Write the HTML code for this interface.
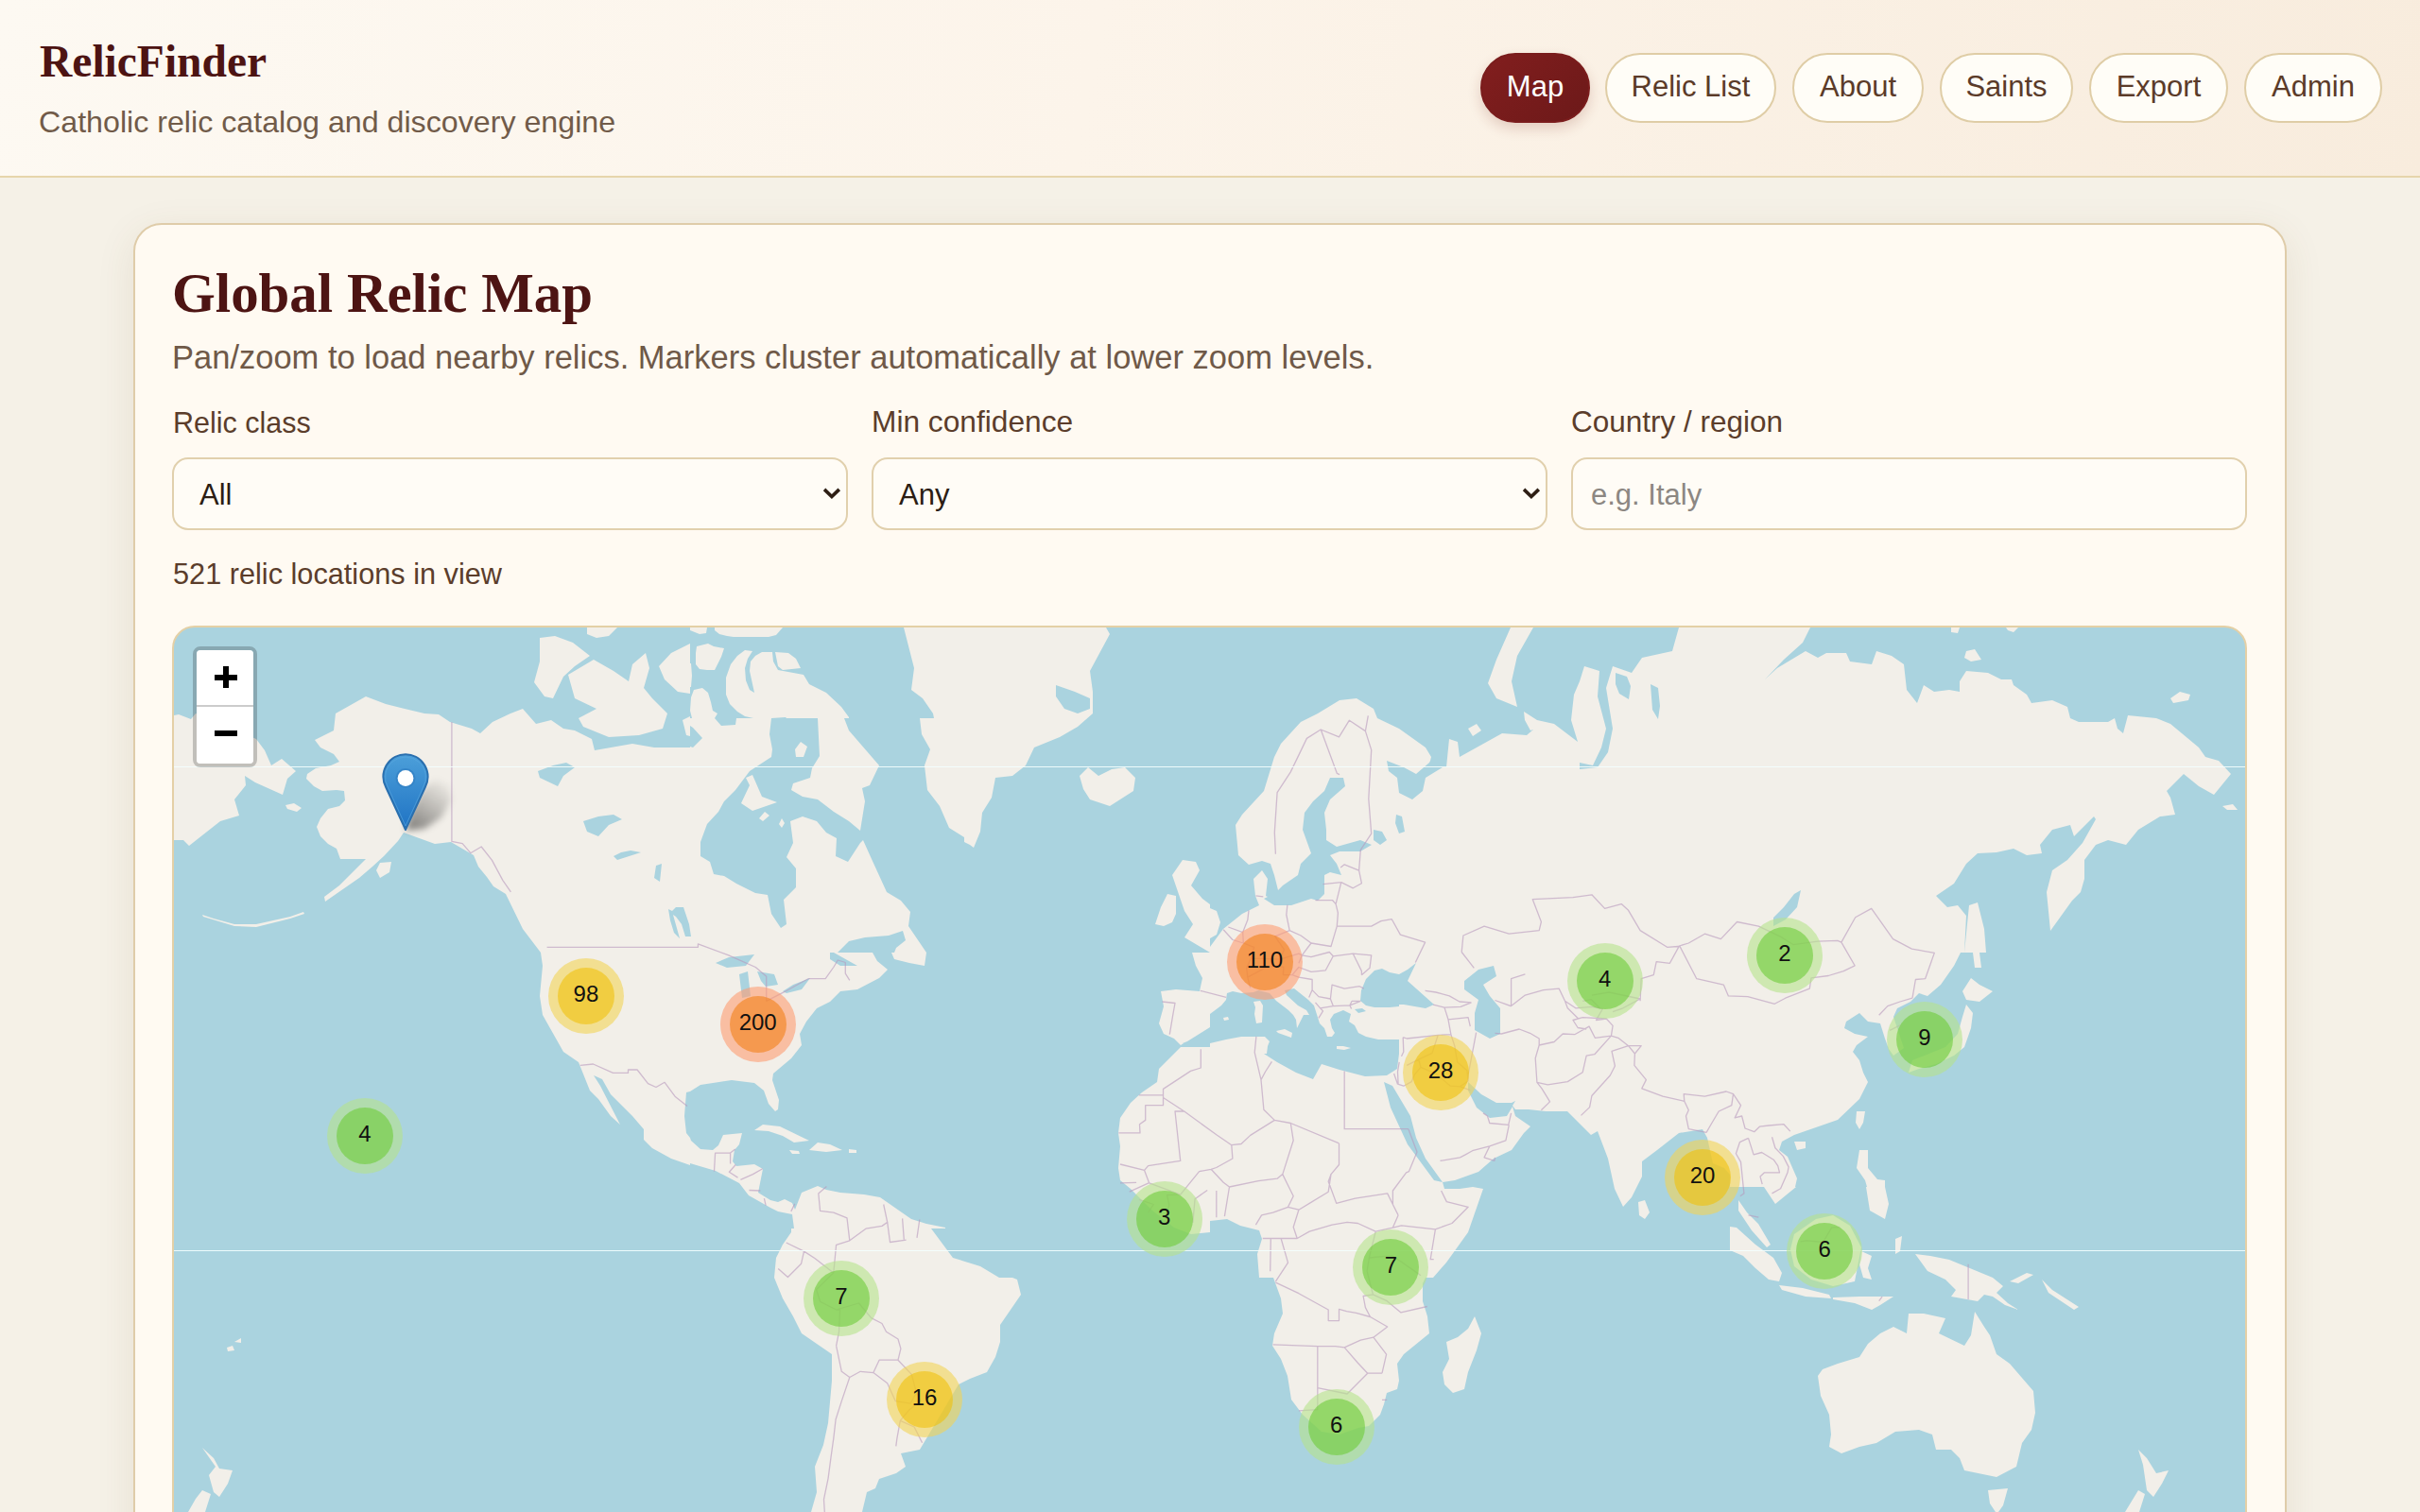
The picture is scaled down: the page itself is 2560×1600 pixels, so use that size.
<!DOCTYPE html>
<html><head><meta charset="utf-8">
<style>
html,body{margin:0;padding:0;}
body{width:2560px;height:1600px;overflow:hidden;position:relative;background:#f5f1e7;font-family:"Liberation Sans",sans-serif;}
.abs{position:absolute;}
#hdr{left:0;top:0;width:2560px;height:186px;background:linear-gradient(100deg,#fdf9f2 0%,#fcf4ea 45%,#f8ecdd 100%);border-bottom:2px solid #e6d5ab;}
#title{left:42px;top:42px;font-family:"Liberation Serif",serif;font-weight:bold;font-size:47.5px;color:#4d1413;white-space:nowrap;line-height:1;}
#sub{left:41px;top:113px;font-size:32.2px;color:#715b49;white-space:nowrap;line-height:1;}
.pill{position:absolute;top:56px;height:74px;box-sizing:border-box;border:2px solid #dfcda6;border-radius:37px;background:#fffdf7;color:#5b3b29;font-size:31px;line-height:67px;text-align:center;white-space:nowrap;}
.pill.act{background:linear-gradient(135deg,#821e1e,#6c1919);border-color:#7a1c1c;color:#fff;box-shadow:0 6px 14px rgba(120,40,20,0.18);}
#card{left:141px;top:236px;width:2278px;height:1500px;box-sizing:border-box;border:2px solid #dfcca9;border-radius:30px;background:#fffaf2;box-shadow:0 10px 40px rgba(110,80,40,0.10);}
#h1{left:182px;top:281.5px;font-family:"Liberation Serif",serif;font-weight:bold;font-size:58.9px;color:#4d1413;white-space:nowrap;line-height:1;}
#lead{left:182px;top:361px;font-size:34.5px;color:#6f5948;white-space:nowrap;line-height:1;}
.lbl{position:absolute;font-size:30.5px;color:#5b3d2b;white-space:nowrap;line-height:1;}
.inp{position:absolute;top:484px;height:77px;width:715px;box-sizing:border-box;border:2px solid #e1d0ad;border-radius:17px;background:#fffcf6;}
.inp span{position:absolute;left:27px;top:22px;font-size:31px;color:#2b1d14;line-height:1;white-space:nowrap;}
#count{left:183px;top:593px;font-size:30.7px;color:#5b3d2b;white-space:nowrap;line-height:1;}
#map{left:182px;top:662px;width:2195px;height:1000px;box-sizing:border-box;border:2px solid #e4d0a6;border-radius:24px;overflow:hidden;background:#aad3df;}

.cl{position:absolute;width:80px;height:80px;border-radius:40px;}
.cl div{position:absolute;left:10px;top:10px;width:60px;height:60px;border-radius:30px;text-align:center;line-height:56px;font-size:24px;color:#111;font-family:"Liberation Sans",sans-serif;}
.zc{position:absolute;left:20px;top:20px;width:68px;height:128px;box-sizing:border-box;border:4px solid rgba(0,0,0,0.2);border-radius:8px;background-clip:padding-box;}
.zc>div{position:absolute;background:#000;}
.zc:before{content:"";position:absolute;left:0;top:0;right:0;bottom:0;background:#fff;border-radius:4px;}
.zp{left:19.3px;top:26.1px;width:23.6px;height:5.5px;}
.zph{left:28.1px;top:16.8px;width:6px;height:23.3px;}
.zsep{left:0;top:58px;width:60px;height:2px;background:#ccc !important;}
.zm{left:19.3px;top:85.1px;width:23.6px;height:5.8px;}
</style></head>
<body>
<div id="hdr" class="abs"></div>
<div id="title" class="abs">RelicFinder</div>
<div id="sub" class="abs">Catholic relic catalog and discovery engine</div>
<div class="pill act" style="left:1566px;width:116px;">Map</div>
<div class="pill" style="left:1698px;width:181px;">Relic List</div>
<div class="pill" style="left:1896px;width:139px;">About</div>
<div class="pill" style="left:2052px;width:141px;">Saints</div>
<div class="pill" style="left:2210px;width:147px;">Export</div>
<div class="pill" style="left:2374px;width:146px;">Admin</div>

<div id="card" class="abs"></div>
<div id="h1" class="abs">Global Relic Map</div>
<div id="lead" class="abs">Pan/zoom to load nearby relics. Markers cluster automatically at lower zoom levels.</div>
<div class="lbl" style="left:183px;top:432px;">Relic class</div>
<div class="lbl" style="left:922px;top:431px;font-size:31.7px;">Min confidence</div>
<div class="lbl" style="left:1662px;top:431px;font-size:31.5px;">Country / region</div>
<div class="inp" style="left:182px;"><span>All</span></div>
<div class="inp" style="left:922px;"><span>Any</span></div>
<div class="inp" style="left:1662px;"><span style="color:#8c8782;left:19px;">e.g. Italy</span></div>
<svg class="abs" style="left:860px;top:505px" width="40" height="35" viewBox="860 505 40 35"><polygon points="873.3,516.6 879.9,523.1 886.5,516.6 889.05,519.2 879.9,528.1 870.8,519.2" fill="#2e1e14"/></svg><svg class="abs" style="left:1600px;top:505px" width="40" height="35" viewBox="1600 505 40 35"><polygon points="1613.3,516.6 1619.9,523.1 1626.5,516.6 1629.05,519.2 1619.9,528.1 1610.8,519.2" fill="#2e1e14"/></svg>
<div id="count" class="abs">521 relic locations in view</div>
<div id="map" class="abs"><svg class="abs" style="left:0;top:0" width="2191" height="940" viewBox="0 0 2191 940"><path fill="#f2efe9" d="M2183,193 2178,187 2167,189 2172,193ZM1342,587 1355,585 1380,576 1396,562 1415,553 1428,535 1435,528 1419,517 1416,507 1410,517 1392,519 1378,508 1369,490 1369,481 1383,494 1399,503 1415,503 1419,501 1416,506 1419,510 1433,510 1451,512 1474,512 1499,537 1506,533 1517,562 1524,594 1533,613 1542,603 1553,581 1553,565 1569,553 1592,535 1617,531 1622,540 1628,567 1640,572 1646,579 1646,592 1682,592 1694,610 1716,592 1715,592 1717,583 1707,560 1698,553 1701,544 1714,537 1737,529 1760,521 1783,499 1792,481 1787,471 1783,458 1776,449 1780,442 1792,433 1778,430 1767,424 1769,417 1783,408 1792,417 1805,419 1810,435 1814,446 1819,453 1830,445 1819,412 1823,403 1837,396 1846,387 1855,390 1869,378 1883,358 1890,344 1894,344 1896,305 1887,294 1876,296 1864,284 1883,271 1896,250 1908,239 1928,238 1946,234 1960,241 1976,239 1974,230 1987,214 2006,209 2010,221 2031,200 2033,203 2019,228 2003,246 1987,257 1981,280 1985,321 2008,289 2017,280 2021,266 2021,246 2033,230 2046,225 2065,230 2078,214 2101,200 2117,198 2112,180 2108,173 2126,155 2142,168 2158,177 2176,155 2163,141 2149,137 2142,127 2112,102 2097,96 2067,93 2062,112 2056,107 2053,96 2046,100 2015,100 2006,96 2003,84 1987,77 1965,80 1960,71 1946,61 1944,55 1933,55 1919,48 1896,46 1889,57 1889,68 1878,66 1862,68 1851,61 1844,80 1833,66 1830,39 1817,30 1801,25 1796,39 1773,36 1769,27 1748,27 1739,32 1726,25 1696,43 1683,55 1703,34 1723,16 1731,0 1592,0 1585,25 1553,32 1542,48 1522,41 1515,64 1522,107 1517,132 1506,148 1487,150 1487,143 1501,146 1510,127 1515,107 1506,73 1508,46 1492,41 1487,57 1481,71 1478,98 1485,121 1460,102 1442,98 1428,89 1429,98 1435,109 1438,108 1431,114 1405,112 1360,137 1358,121 1349,118 1346,148 1342,148 1324,159 1321,173 1310,182 1296,175 1294,159 1285,152 1283,141 1301,148 1314,155 1328,143 1329,141 1330,137 1324,127 1296,107 1273,96 1269,86 1251,75 1233,77 1210,91 1192,100 1171,123 1164,137 1153,173 1130,198 1123,209 1126,241 1137,251 1151,247 1160,250 1164,262 1168,278 1173,273 1189,262 1192,250 1203,239 1194,214 1196,196 1205,184 1217,173 1223,159 1237,159 1239,168 1223,182 1217,196 1219,214 1219,225 1230,232 1255,225 1267,230 1255,237 1233,237 1223,241 1230,250 1235,262 1223,259 1217,262 1217,282 1210,289 1203,287 1182,294 1164,294 1153,287 1157,285 1155,284 1157,266 1151,257 1142,266 1144,284 1148,294 1130,303 1110,319 1096,338 1096,329 1103,325 1107,312 1103,300 1096,297 1096,293 1088,287 1076,273 1085,257 1081,248 1067,246 1056,262 1069,300 1078,314 1069,328 1096,344 1077,344 1081,358 1088,371 1085,385 1060,383 1044,385 1047,401 1042,419 1047,430 1058,435 1065,442 1068,440 1067,440 1072,438 1096,423 1096,409 1108,400 1113,394 1114,387 1120,385 1129,387 1142,386 1147,384 1159,387 1166,395 1179,405 1184,410 1187,415 1188,424 1195,410 1201,410 1198,405 1189,400 1177,389 1175,384 1185,382 1200,394 1206,400 1212,419 1217,424 1220,433 1225,433 1228,429 1225,424 1223,415 1227,409 1237,405 1245,409 1243,417 1249,421 1253,429 1261,433 1274,436 1296,436 1296,451 1294,467 1283,474 1260,475 1233,468 1214,462 1205,478 1187,471 1167,460 1153,451 1156,451 1157,443 1159,438 1154,433 1142,433 1129,433 1113,436 1096,440 1096,444 1065,444 1042,467 1040,481 1024,492 1012,503 1001,519 999,535 1001,549 999,572 1001,585 1012,594 1035,617 1058,635 1076,642 1096,640 1096,628 1114,626 1128,633 1148,638 1151,647 1146,663 1148,688 1163,688 1171,710 1173,726 1164,747 1162,760 1171,774 1178,792 1182,817 1194,833 1214,851 1233,854 1253,847 1264,845 1276,833 1280,822 1283,810 1294,806 1296,797 1294,779 1301,769 1328,747 1326,729 1321,713 1321,694 1324,688 1332,688 1346,672 1369,640 1385,594 1374,592 1360,594 1344,594ZM1333,585 1305,547 1287,508 1280,481 1289,485 1308,517 1314,540 1324,562 1342,587ZM1703,296 1714,282 1721,278 1717,296 1705,309 1692,316 1692,307ZM1572,83 1570,97 1564,87 1562,60 1570,64ZM1525,60 1525,48 1537,52 1541,62 1539,76 1529,70ZM1392,390 1403,403 1403,430 1392,435 1376,426 1376,408 1380,394 1365,383 1365,374 1380,362 1396,358 1399,369 1385,378ZM1270,402 1261,400 1255,395 1256,384 1261,372 1270,363 1278,361 1286,365 1296,367 1305,362 1314,355 1305,374 1333,399 1324,403 1301,399 1296,399 1296,401 1286,402ZM1296,218 1292,207 1293,198 1299,200 1302,216ZM1269,225 1269,214 1278,216 1283,225 1276,230ZM1261,406 1253,408 1249,404 1257,403ZM2122,68 2112,75 2115,80 2131,77 2133,71ZM2094,920 2103,906 2110,892 2097,895 2087,879 2078,870 2083,886 2087,913ZM2078,913 2064,936 2079,936 2085,917ZM1976,690 1983,704 2010,722 2015,719 1987,701ZM1928,899 1949,888 1955,863 1965,849 1969,831 1967,808 1942,779 1928,769 1921,749 1915,740 1905,724 1901,749 1894,760 1867,747 1874,731 1851,726 1835,726 1833,747 1819,740 1805,747 1792,758 1783,772 1760,779 1744,785 1739,792 1742,813 1751,833 1753,854 1751,867 1764,874 1783,867 1801,863 1821,851 1846,849 1860,854 1864,870 1880,870 1889,879 1894,892ZM1951,694 1967,685 1960,683 1942,692ZM1908,713 1915,706 1924,708 1937,717 1951,722 1940,715 1928,704 1935,697 1924,688 1878,669 1858,665 1842,663 1855,681 1874,690 1885,701 1880,708ZM1940,3 1946,5 1951,0 1938,0ZM1921,927 1927,936 1930,936 1935,929 1940,911 1919,913ZM1892,385 1896,394 1910,396 1924,385 1910,378 1901,371ZM1908,291 1899,294 1894,344 1903,344 1905,360 1912,360 1910,344 1917,344 1915,319ZM1894,32 1901,36 1912,34 1905,23 1896,25ZM1864,462 1883,453 1894,444 1901,424 1903,408 1896,399 1892,412 1887,430 1874,444 1839,458 1835,471 1846,467ZM1889,0 1880,0 1880,5 1887,6ZM1828,644 1821,647 1821,663 1826,660ZM1819,708 1783,708 1755,709 1755,711 1778,715 1796,722 1805,717ZM1790,592 1794,617 1810,626 1814,610 1810,592 1810,585 1802,584 1792,572 1792,553 1783,553 1780,572 1789,585 1791,592ZM1792,678 1796,665 1785,660 1783,674 1787,688 1796,690ZM1779,524 1783,531 1787,524 1789,512 1780,512ZM1785,656 1773,633 1755,622 1737,626 1714,642 1710,658 1714,676 1732,690 1755,697 1778,692ZM1726,708 1753,710 1751,706 1723,699 1698,696 1701,701ZM1726,544 1714,544 1717,553 1726,551ZM1646,634 1646,659 1660,665 1673,678 1687,690 1698,692 1701,683 1692,667 1673,653 1653,635ZM1685,656 1689,653 1676,631 1664,619 1655,606 1655,617 1669,638ZM1549,608 1550,622 1556,626 1561,619 1556,606ZM1421,30 1438,0 1414,0 1399,34 1390,59 1399,75 1421,84 1415,57ZM1378,102 1369,107 1374,115 1383,109ZM1358,751 1346,756 1349,774 1342,788 1344,801 1353,810 1365,806 1369,788 1378,765 1383,747 1376,729 1369,742ZM1230,446 1238,447 1245,445 1237,443 1230,443ZM1166,427 1168,429 1182,434 1183,429 1175,425ZM1145,419 1151,418 1152,400 1149,395 1142,396 1144,402 1143,409ZM1111,416 1116,415 1115,412 1110,413ZM1038,314 1047,316 1056,312 1060,303 1060,284 1051,282 1044,296ZM990,189 1015,173 1017,159 1006,148 992,150 978,157 967,148 958,157 962,171 969,182ZM901,146 910,127 937,116 956,105 972,91 972,68 969,46 990,7 986,0 772,0 783,43 780,66 792,75 803,91 804,96 789,96 791,113 800,129 794,146 797,172 810,189 820,212 836,222 836,227 842,230 846,233 853,216 855,196 865,180 869,159 887,157ZM969,75 969,86 956,91 942,86 933,73 933,61 953,68ZM472,526 451,485 444,474 453,478 462,494 485,517 497,531 497,542 506,551 526,562 546,569 546,567 573,575 598,588 608,601 631,614 639,618 654,621 656,636 653,636 653,640 644,653 637,667 635,688 644,710 655,729 664,747 696,769 696,797 692,842 687,865 678,888 680,915 674,936 728,936 733,915 742,911 746,901 764,895 774,888 769,874 789,870 830,801 842,795 860,788 869,772 874,756 874,738 896,706 892,690 887,688 873,688 853,676 824,667 801,636 816,636 816,635 796,631 780,626 747,603 730,600 705,598 690,595 681,591 664,598 657,616 654,609 646,605 639,608 631,606 618,598 623,573 614,568 595,570 591,565 593,553 598,547 601,535 581,537 576,548 570,553 557,552 547,543 546,540 542,535 540,517 542,492 546,491 557,484 590,479 614,482 624,490 629,504 636,512 639,510 640,500 633,479 634,472 653,456 664,442 662,430 669,417 680,403 694,396 705,385 723,383 746,371 755,362 744,353 739,344 702,344 714,332 731,328 756,326 771,321 774,331 764,339 762,344 759,344 762,351 778,355 794,358 796,344 777,316 779,301 769,289 754,280 738,245 729,225 726,228 713,248 700,242 701,223 690,217 680,205 665,200 652,205 655,228 648,243 658,255 658,275 645,288 648,314 642,318 632,303 628,283 615,281 595,271 582,263 571,261 567,248 557,242 557,227 564,208 576,195 582,184 594,172 609,152 632,137 633,129 630,113 632,96 647,95 648,96 681,96 683,136 675,149 673,159 655,165 653,172 665,179 681,182 698,195 714,205 726,215 731,184 728,170 736,167 746,146 714,109 709,96 714,96 714,95 706,84 690,69 672,60 666,50 639,45 634,36 633,26 622,26 615,30 610,36 609,46 614,69 609,66 605,56 604,43 607,33 612,25 604,24 596,30 589,39 584,53 584,71 588,81 596,89 604,94 613,96 595,96 594,103 579,104 572,96 575,91 570,88 568,79 565,69 559,64 550,66 547,74 546,88 548,96 546,96 546,94 538,98 542,114 546,115 546,104 549,106 559,117 549,127 546,126 546,127 508,127 485,123 445,130 442,118 424,109 412,107 399,98 383,102 369,86 356,91 337,100 324,112 315,107 292,100 280,92 265,91 244,86 224,81 203,73 171,91 169,109 149,119 155,127 169,134 175,142 166,146 150,149 141,155 140,160 148,168 157,173 172,172 180,173 181,183 175,189 163,192 155,202 151,211 155,221 163,229 172,234 176,245 203,245 175,273 159,285 160,290 196,265 210,253 222,242 237,226 243,217 276,229 293,227 317,241 322,253 331,264 338,274 351,282 369,319 388,344 390,358 387,390 390,410 412,449 428,460 440,490 449,499 462,517ZM705,358 694,351 694,344 698,344 723,358ZM673,371 664,383 648,387 644,385 655,378ZM626,380 621,374 617,364 635,367 639,378ZM573,355 587,349 614,346 605,358 585,360ZM601,392 598,367 607,364 610,390ZM531,306 528,304 535,329 529,323 525,310 523,298 527,300 531,296 539,296 545,314 547,327 541,327 537,314ZM516,250 514,269 508,265 510,252ZM494,238 469,246 465,242 473,238 483,236ZM433,205 449,200 465,198 474,203 460,209 449,221 437,216ZM387,159 385,152 401,146 415,143 424,148 412,157 406,168ZM714,556 722,556 722,553 714,552ZM690,555 707,553 694,547 681,545 672,553ZM614,532 629,533 644,538 656,545 672,543 641,528 623,526ZM658,137 666,137 670,126 663,121 657,129ZM636,26 639,41 644,45 663,43 658,33 650,27ZM661,554 651,553 654,557 662,557ZM646,207 643,202 640,208 643,212ZM644,0 572,0 572,3 577,7 585,9 592,10 629,10 637,8ZM622,179 612,156 605,159 609,167 600,186 612,194 638,185ZM630,199 625,195 619,202 623,205ZM571,20 565,17 553,20 552,27 552,39 556,44 564,45 572,45 579,31 582,22ZM546,0 546,3 556,7 563,6 564,0ZM546,17 526,27 513,41 519,55 533,68 546,70 546,63 547,63 548,51 547,38 546,38ZM447,86 428,96 433,105 460,116 492,114 517,107 522,91 506,75 497,64 503,43 499,27 485,39 481,57 465,46 444,34 417,50 424,75ZM447,11 460,9 469,0 437,0 437,7ZM403,9 387,11 387,36 381,58 392,73 401,75 412,52 424,41 440,30 422,16ZM214,257 218,265 228,259 230,248 218,249ZM64,316 87,317 123,308 138,303 137,301 123,306 87,314 64,314 42,308 30,304 31,306ZM135,191 127,186 118,188 120,192 130,195ZM-4,225 10,225 16,231 49,205 69,199 64,182 76,167 75,157 86,164 115,177 120,160 129,152 114,139 103,146 96,130 87,118 23,91 18,97 5,92 -4,94ZM71,757 71,752 64,756ZM56,762 57,766 64,765 62,760ZM30,868 44,888 37,897 42,915 48,920 57,906 62,892 48,890 42,879ZM23,922 15,936 33,936 39,917 30,913Z"/><path fill="none" stroke="#b898bc" stroke-opacity="0.6" stroke-width="1.3" stroke-linejoin="round" d="M293.9,99.9 293.9,226.3 305.2,228.6 313.8,238.7 325.2,232.0 336.5,246.4 347.9,267.6 356.4,279.8M394.6,338.3 554.4,338.3 554.4,334.8 586.8,346.9 615.3,359.5 626.7,369.3 626.7,395.3 646.6,385.2 660.8,377.3 671.0,371.7 689.2,371.7 697.8,359.5 702.3,352.0 710.3,354.5 710.3,366.1 714.8,373.3M429.8,463.3 443.5,462.0 464.5,471.4 480.5,471.4 480.5,468.0 490.1,468.0 501.5,482.6 510.0,486.5 519.1,481.3 530.0,496.2 543.0,506.4M571.5,575.6 572.6,556.1 588.6,556.1 593.7,551.9M588.6,556.1 588.6,567.4M594.2,568.5 587.4,576.2 596.5,582.1M599.4,584.4 612.4,578.6 622.7,572.7M608.5,595.5 620.4,596.0M624.4,604.1 626.1,611.6M652.8,617.9 656.8,609.9M700.6,760.1 706.3,787.3 714.8,793.5 706.3,818.6 700.1,838.0 697.8,858.1 694.9,878.8 692.1,900.3 687.5,922.7 688.7,942.3M700.6,760.1 703.5,745.3 704.6,722.0 700.6,722.0M700.6,722.0 724.5,715.0 737.6,730.7 749.0,736.5 753.5,745.3 766.0,753.0 768.9,763.1 766.0,775.2M714.8,793.5 726.2,787.3 739.9,788.6 746.1,775.2 766.0,775.2M739.9,788.6 754.7,799.7 763.2,818.6 779.1,821.2 785.4,809.7M766.0,775.2 780.3,790.4 785.4,809.7M785.4,809.7 789.9,818.6 777.4,828.3 768.3,839.4 783.1,846.0 791.6,862.8M768.3,839.4 764.9,858.1 763.8,866.3M700.6,722.0 683.6,713.3 679.6,700.6 697.8,682.9M697.8,682.9 677.9,667.5 666.5,660.1 647.7,651.0M666.5,660.1 663.6,673.2 649.4,687.5 639.2,678.4M697.8,682.9 700.6,653.3 714.8,648.8 712.0,624.8 697.8,619.1 683.6,617.4 681.8,598.9 690.4,591.4M714.8,648.8 731.9,636.2 749.0,633.4 754.7,629.4 750.7,610.5M754.7,629.4 757.5,650.5 774.6,648.2M770.6,625.4 772.3,647.6M788.8,626.5 786.0,645.9M1086.3,446.2 1086.3,466.0 1075.5,469.4 1046.5,488.4 1046.5,494.9 1020.9,494.9M1046.5,494.9 1046.5,505.7 1027.7,505.7 1027.7,521.4 1021.5,525.7 1022.0,534.9 999.3,534.9M1046.5,497.5 1068.7,512.0 1059.0,512.0 1064.7,564.4 1030.6,569.7 1026.6,574.4 1001.0,568.0M1068.7,512.0 1102.8,536.8 1118.8,547.7 1129.0,546.5 1138.7,537.4 1164.3,521.4M1144.9,432.9 1143.2,449.7 1150.0,478.6 1152.9,510.2 1164.3,521.4M1161.4,459.3 1154.6,470.0 1150.0,478.6M1164.3,521.4 1181.3,524.5 1232.5,545.9M1238.2,469.4 1238.2,530.7 1305.9,530.7M1232.5,545.9 1232.5,568.5 1224.0,578.6 1221.2,586.2 1229.7,609.3 1249.6,604.1 1283.7,598.9 1289.4,610.5 1295.1,621.9M1305.9,530.7 1315.0,554.9 1306.5,575.6 1303.6,576.8 1289.4,596.0 1289.4,610.5M1181.3,524.5 1184.2,542.8 1172.8,578.6 1178.5,590.2 1184.2,601.8 1178.5,613.3 1189.9,616.2 1204.1,607.6 1221.2,597.2 1224.0,578.6M1118.8,547.7 1119.9,562.0 1102.8,571.5 1097.1,573.3 1084.6,575.6 1064.7,600.1 1031.7,587.9 1026.6,574.4M1097.1,573.3 1110.2,587.3 1116.5,592.0 1147.2,585.6 1167.1,583.2 1172.8,578.6M1116.5,592.0 1111.4,623.1M1102.8,596.0 1102.8,624.2M1077.8,629.9 1080.1,604.7 1093.2,595.5M1047.1,633.9 1052.8,611.0 1050.5,600.7 1064.7,600.1M1030.6,619.1 1036.3,610.5 1020.9,605.3M1018.1,587.3 1001.0,587.9M1031.1,587.9 1010.7,597.2M1144.4,632.2 1150.6,621.9 1162.6,619.1 1178.5,613.3M1189.9,616.2 1184.2,634.5 1188.2,646.5 1201.2,639.1 1225.1,632.2 1241.1,629.4 1252.4,630.5 1271.2,639.1 1289.4,635.1 1295.1,621.9M1151.8,646.5 1160.3,646.5 1188.2,646.5M1160.3,646.5 1159.7,681.2M1171.1,646.5 1178.5,672.1 1165.4,692.1M1271.2,639.1 1264.4,667.0 1262.1,681.2 1268.4,705.8 1258.1,707.5 1260.4,719.6 1265.5,729.5 1250.7,725.4 1240.5,723.7 1232.5,721.4 1232.5,733.6 1221.2,733.6 1221.2,722.0 1189.9,704.7 1165.4,693.2M1289.4,635.1 1298.5,632.8 1334.4,636.8 1329.2,668.7 1332.7,668.7M1334.4,636.8 1352.0,630.5 1369.1,613.3 1346.3,607.6 1340.6,596.0M1288.9,664.7 1309.3,678.9 1319.0,685.8M1264.4,667.0 1288.9,664.7M1268.4,705.8 1283.2,712.7 1298.0,724.9 1325.8,718.5M1162.6,758.9 1209.8,760.7 1228.6,760.7 1238.2,761.9M1209.8,760.7 1209.8,787.3 1209.8,804.7 1209.8,827.6 1189.9,828.9M1209.8,804.7 1241.1,811.0 1262.7,789.2 1278.0,789.2M1238.2,761.9 1252.4,778.2 1262.7,789.2M1265.5,729.5 1283.7,740.0 1268.9,751.2 1255.3,754.2 1238.2,761.9M1278.0,789.2 1282.6,769.1 1268.9,751.2M1278.0,817.3 1283.2,817.3M1085.8,384.4 1113.1,391.4M1045.4,396.0 1059.0,397.5 1056.7,410.3 1053.3,430.7M1110.2,319.7 1119.9,330.5 1131.3,334.0 1142.6,338.3 1139.2,350.3 1134.7,360.3 1135.8,370.1 1138.7,381.3M1131.3,334.0 1130.7,322.4 1135.8,309.6 1137.0,299.3M1115.3,317.0 1130.1,322.4M1144.4,283.8 1152.3,284.8M1139.2,350.3 1150.0,350.3 1170.0,351.1 1174.5,340.9 1164.8,326.9 1180.2,320.6 1176.8,304.0 1177.9,293.5M1135.8,370.1 1155.7,359.5 1167.1,357.8 1173.9,359.5 1173.4,367.7M1180.2,320.6 1192.1,326.0 1203.0,334.0 1224.0,337.5 1230.3,316.1 1231.4,302.1 1229.1,292.6 1225.7,288.7 1207.5,288.7M1170.0,351.1 1189.9,345.2 1193.3,346.9 1203.0,334.0M1193.3,346.9 1203.0,348.6 1222.3,343.5 1226.3,347.8M1189.9,355.3 1193.3,346.9M1173.4,367.7 1183.0,367.7 1189.9,359.5 1203.0,364.4 1218.3,362.8 1226.3,347.8 1247.3,345.2 1256.4,363.6 1256.4,367.7M1183.0,367.7 1189.9,370.1 1204.1,372.5 1204.1,383.6 1210.9,390.6 1223.4,393.0 1226.3,400.6 1243.9,399.8 1255.3,395.3M1223.4,393.0 1225.1,378.1 1238.2,382.1 1254.2,379.7 1258.7,382.1M1200.7,391.4 1204.1,383.6M1207.5,396.8 1212.6,402.8 1215.5,405.9 1210.9,413.3M1212.6,402.8 1226.3,400.6M1229.1,292.6 1234.8,269.7 1247.3,275.8 1256.4,270.7 1253.6,257.2 1238.2,250.8 1234.2,254.0M1215.5,271.7 1234.8,269.7M1253.6,257.2 1255.3,235.4M1231.4,302.1 1230.3,316.1 1266.7,316.1 1276.9,310.6 1288.3,308.7 1297.4,325.1 1323.6,333.1 1313.3,354.5M1247.3,345.2 1266.7,346.9 1265.0,360.3 1256.4,367.7M1255.3,235.4 1266.7,218.2 1263.8,181.2 1266.7,129.6 1260.4,109.6 1263.3,93.3M1213.2,108.0 1232.5,115.9 1243.3,98.3 1260.4,109.6 1263.3,93.3M1165.4,239.8 1164.3,217.0 1167.1,174.6 1181.3,152.9 1198.4,117.4 1213.2,108.0 1230.3,154.3 1233.1,155.6M1243.9,399.8 1246.2,395.3 1255.3,395.3M1245.6,403.6 1243.9,399.8M1300.2,433.6 1304.2,435.0 1337.2,431.4 1350.9,430.7 1348.0,414.8 1344.0,402.1 1332.1,399.1M1344.0,402.1 1361.1,401.3 1372.5,396.8M1323.6,384.4 1334.9,386.0 1349.2,389.9 1360.0,396.0 1372.5,396.8M1350.9,430.7 1354.8,442.7 1357.7,459.9 1367.9,468.7 1369.1,480.0M1337.2,431.4 1331.0,450.4 1316.7,457.2 1319.0,465.3 1335.5,472.7 1350.3,485.2 1360.5,485.8 1369.1,480.0M1300.2,433.6 1300.8,449.0 1298.5,453.8M1304.2,463.3 1316.7,457.2M1295.1,483.2 1294.5,470.0 1296.2,459.9M1294.5,483.2 1300.8,485.2 1309.3,480.6 1312.2,473.4 1319.0,465.3M1294.5,483.2 1290.6,472.0M1360.5,485.8 1371.3,489.7M1385.0,513.9 1389.5,517.0 1391.8,524.5 1411.7,526.3 1414.6,513.9M1391.8,548.9 1408.9,542.8 1412.3,526.3M1391.8,548.9 1386.1,560.8 1396.9,564.4 1397.5,560.8M1339.5,564.4 1360.5,560.8 1366.2,557.9 1373.6,553.7 1391.8,548.9M1369.1,480.0 1369.1,473.4 1377.6,428.6M1348.0,414.8 1369.1,412.6 1371.3,422.1M1444.2,442.0 1440.2,455.8 1441.9,481.3 1447.0,487.8 1453.3,498.1 1455.5,501.9 1446.4,510.8M1397.5,429.3 1404.3,430.0 1423.1,425.0 1434.5,429.3 1444.2,435.0 1444.2,442.0M1444.2,442.0 1460.1,438.5 1469.2,430.0 1481.7,430.7 1497.1,422.1 1503.3,434.3 1520.4,432.1 1502.8,451.7 1494.2,453.1 1490.2,470.7 1474.3,480.6 1453.3,483.9 1441.9,481.3M1520.4,432.1 1527.8,434.3 1538.6,442.7 1545.4,451.0 1544.9,463.3 1557.4,478.6 1552.8,487.8 1575.0,496.2 1597.8,501.3 1597.2,493.6 1619.4,496.2 1642.1,491.0 1649.5,493.6 1647.8,505.7 1634.2,512.0 1626.8,524.5 1621.1,534.3M1597.8,501.3 1602.3,510.8 1599.5,517.0 1602.3,530.7 1621.1,534.3M1488.5,516.4 1497.6,507.6 1499.9,495.5 1519.3,474.0 1524.4,464.0 1521.0,448.3 1538.6,442.7M1545.4,451.0 1552.2,442.7 1538.6,442.7M1397.5,394.5 1414.6,400.6 1429.4,389.1 1448.7,383.6 1465.2,382.1 1471.5,395.3 1482.8,402.8 1499.9,401.3 1511.3,403.6 1504.5,415.5 1515.3,414.0 1522.1,421.4 1520.4,432.1M1362.2,343.5 1375.3,360.3M1397.5,394.5 1414.0,400.6M1414.6,400.6 1414.6,371.7 1429.4,366.9M1362.2,343.5 1363.9,326.0 1386.1,316.1 1412.3,324.2 1444.2,320.6 1446.4,311.5 1437.3,287.7 1480.0,285.7 1499.9,282.8 1513.6,297.4 1531.2,292.6 1538.6,299.3 1551.1,320.6 1579.6,338.3 1590.9,337.5M1490.2,395.3 1499.3,393.7 1508.4,402.8 1499.9,401.3M1515.3,414.0 1490.2,412.6 1480.0,415.5 1485.1,423.5 1494.2,425.0M1471.5,395.3 1474.3,402.8 1485.7,414.0M1551.1,395.3 1552.2,371.7 1565.3,367.7 1568.2,353.7 1582.4,355.3 1592.6,336.6M1522.1,406.6 1532.9,402.8 1551.1,393.0M1499.9,389.1 1518.1,386.0 1551.1,393.0M1590.9,337.5 1602.3,334.0 1619.4,324.2 1636.4,329.6 1653.5,311.5 1676.3,316.1 1699.0,326.9 1713.2,335.7 1738.8,332.2 1759.9,331.3 1763.9,333.1M1592.6,336.6 1610.8,371.7 1639.3,378.1 1644.4,389.9 1664.9,390.6 1693.3,398.3 1704.7,392.2 1730.3,382.1 1732.0,370.9 1750.2,368.5 1766.2,363.6 1778.1,357.8 1763.9,333.1M1763.9,333.1 1778.7,306.8 1795.7,297.4 1818.5,329.6 1838.4,340.1 1862.3,344.4 1852.6,371.7 1842.4,372.5 1839.0,392.2M1803.7,410.3 1812.8,400.6 1825.9,396.0 1839.0,392.2M1815.1,426.4 1826.5,420.6M1649.5,493.6 1657.5,505.7 1651.2,518.9 1658.6,517.0 1662.0,530.0 1671.7,533.7 1677.4,528.2 1687.1,527.0 1703.0,525.7 1709.8,533.1M1665.5,540.4 1671.1,557.9 1679.7,555.5 1692.2,563.2 1696.7,569.7 1698.5,576.8 1682.5,576.8 1678.0,580.9 1680.2,589.1M1690.5,539.2 1693.9,550.7 1702.4,559.6 1708.1,570.9 1707.0,576.8 1699.6,593.7 1690.5,598.9M1665.5,540.4 1656.4,544.7 1652.4,556.7 1657.5,565.6 1660.9,598.9 1656.9,601.8M1665.5,621.9 1676.3,624.2M1720.6,649.9 1727.5,648.8 1744.5,650.5 1753.6,635.1 1762.2,634.5M1898.1,673.8 1898.1,711.0M1803.7,712.7 1807.1,708.1"/><rect x="0" y="147" width="2191" height="1" fill="#f4ffff" opacity="0.9"/><rect x="0" y="659" width="2191" height="1" fill="#f4ffff" opacity="0.9"/></svg><div class="cl" style="left:161.9px;top:497.9px;background:rgba(181,226,140,0.6)"><div style="background:rgba(110,204,57,0.6)">4</div></div><div class="cl" style="left:395.9px;top:350.0px;background:rgba(241,211,87,0.6)"><div style="background:rgba(240,194,12,0.6)">98</div></div><div class="cl" style="left:577.7px;top:379.8px;background:rgba(253,156,115,0.6)"><div style="background:rgba(241,128,23,0.6)">200</div></div><div class="cl" style="left:1114.0px;top:314.2px;background:rgba(253,156,115,0.6)"><div style="background:rgba(241,128,23,0.6)">110</div></div><div class="cl" style="left:1007.8px;top:585.7px;background:rgba(181,226,140,0.6)"><div style="background:rgba(110,204,57,0.6)">3</div></div><div class="cl" style="left:1300.0px;top:431.4px;background:rgba(241,211,87,0.6)"><div style="background:rgba(240,194,12,0.6)">28</div></div><div class="cl" style="left:1473.6px;top:334.0px;background:rgba(181,226,140,0.6)"><div style="background:rgba(110,204,57,0.6)">4</div></div><div class="cl" style="left:1664.0px;top:307.4px;background:rgba(181,226,140,0.6)"><div style="background:rgba(110,204,57,0.6)">2</div></div><div class="cl" style="left:1812.0px;top:396.2px;background:rgba(181,226,140,0.6)"><div style="background:rgba(110,204,57,0.6)">9</div></div><div class="cl" style="left:1577.1px;top:541.8px;background:rgba(241,211,87,0.6)"><div style="background:rgba(240,194,12,0.6)">20</div></div><div class="cl" style="left:1706.1px;top:620.3px;background:rgba(181,226,140,0.6)"><div style="background:rgba(110,204,57,0.6)">6</div></div><div class="cl" style="left:1247.4px;top:637.0px;background:rgba(181,226,140,0.6)"><div style="background:rgba(110,204,57,0.6)">7</div></div><div class="cl" style="left:1189.8px;top:805.7px;background:rgba(181,226,140,0.6)"><div style="background:rgba(110,204,57,0.6)">6</div></div><div class="cl" style="left:666.0px;top:669.9px;background:rgba(181,226,140,0.6)"><div style="background:rgba(110,204,57,0.6)">7</div></div><div class="cl" style="left:754.0px;top:777.3px;background:rgba(241,211,87,0.6)"><div style="background:rgba(240,194,12,0.6)">16</div></div><svg class="abs" style="left:220.9px;top:132.8px" width="90" height="90" viewBox="0 0 90 90"><defs><filter id="bl" x="-50%" y="-50%" width="200%" height="200%"><feGaussianBlur stdDeviation="3.5"/></filter></defs><linearGradient id="sg" x1="0.2" y1="1" x2="0.8" y2="0"><stop offset="0" stop-color="#000" stop-opacity="0.45"/><stop offset="0.55" stop-color="#000" stop-opacity="0.2"/><stop offset="1" stop-color="#000" stop-opacity="0.02"/></linearGradient><path d="M24,82 L44,80 L62,68 L72,50 L70,34 L56,28 L42,38 L30,60 Z" fill="url(#sg)" filter="url(#bl)"/></svg><svg class="abs" style="left:219.9px;top:132.8px" width="50" height="82" viewBox="0 0 50 82"><defs><linearGradient id="mg" x1="0" y1="0" x2="0" y2="1"><stop offset="0" stop-color="#4c9fd9"/><stop offset="1" stop-color="#1f73c4"/></linearGradient></defs><path d="M25,81 L4.2,36 A23.6,23.6 0 1 1 45.8,36 Z" fill="url(#mg)" stroke="#2a6fae" stroke-width="2"/><path d="M25,77 L6.5,36.5 A21.5,21.5 0 1 1 43.5,36.5 Z" fill="none" stroke="#5aa8e0" stroke-width="1" opacity="0.6"/><circle cx="25" cy="26.5" r="10.5" fill="#3585c8"/><circle cx="25" cy="26.5" r="8.4" fill="#fff"/></svg><div class="zc"><div class="zp"></div><div class="zph"></div><div class="zsep"></div><div class="zm"></div></div></div>
</body></html>
